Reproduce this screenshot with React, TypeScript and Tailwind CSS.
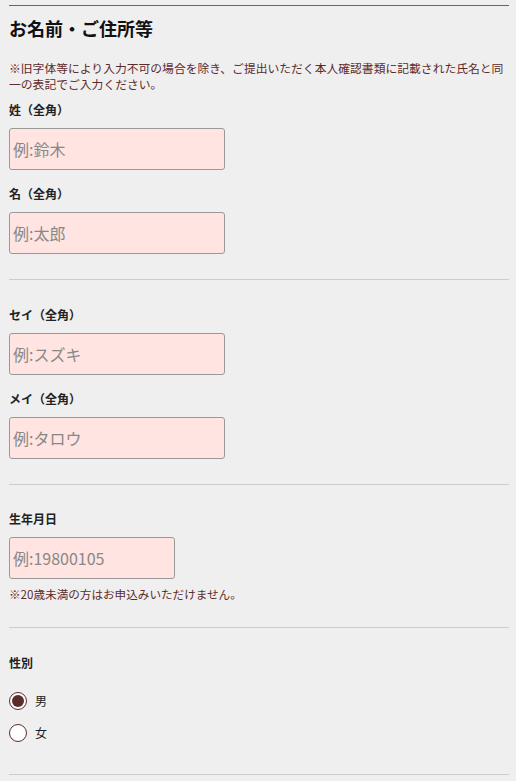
import React from "react";

const font = { fontFamily: '"Noto Sans CJK JP", "Noto Sans", sans-serif' };

function Field({ label, placeholder, wide = true, first = false }: { label: string; placeholder: string; wide?: boolean; first?: boolean }) {
  return (
    <div className={first ? "" : "mt-[15px]"}>
      <div className="text-[12px] leading-[18px] font-bold text-[#222]">{label}</div>
      <input
        placeholder={placeholder}
        className={`mt-[9px] block h-[42px] ${wide ? "w-[216px]" : "w-[166px]"} rounded-[3px] border border-[#999] bg-[#ffe4e1] px-[3px] text-[16px] text-[#333] placeholder:text-[#888] outline-none`}
      />
    </div>
  );
}

function Radio({ label, checked }: { label: string; checked?: boolean }) {
  return (
    <label className="flex h-[32px] items-center gap-[8px]">
      <span className="flex h-[18px] w-[18px] items-center justify-center rounded-full border-[1.5px] border-[#5c2b2b] bg-white">
        {checked && <span className="h-[12px] w-[12px] rounded-full bg-[#5c2b2b]" />}
      </span>
      <span className="text-[12px] text-[#222]">{label}</span>
    </label>
  );
}

export default function App() {
  return (
    <div className="min-h-screen bg-[#efefef] pl-[9px] pt-[5px]" style={font}>
      <div className="w-[500px] border-t border-[#666]">
        <h2 className="mt-[10px] text-[18px] leading-[24px] font-bold text-[#111]">お名前・ご住所等</h2>
        <p className="mt-[20px] text-[11.8px] leading-[16px] text-[#5c2b2b]">
          ※旧字体等により入力不可の場合を除き、ご提出いただく本人確認書類に記載された氏名と同一の表記でご入力ください。
        </p>
        <div className="mt-[9px]">
          <Field first label="姓（全角）" placeholder="例:鈴木" />
          <Field label="名（全角）" placeholder="例:太郎" />
        </div>

        <hr className="mt-[25px] border-[#ccc]" />

        <div className="mt-[26px]">
          <Field first label="セイ（全角）" placeholder="例:スズキ" />
          <Field label="メイ（全角）" placeholder="例:タロウ" />
        </div>

        <hr className="mt-[25px] border-[#ccc]" />

        <div className="mt-[25px]">
          <Field first wide={false} label="生年月日" placeholder="例:19800105" />
          <p className="mt-[7px] text-[11.6px] leading-[16px] text-[#5c2b2b]">※20歳未満の方はお申込みいただけません。</p>
        </div>

        <hr className="mt-[25px] border-[#ccc]" />

        <div className="mt-[26px]">
          <div className="text-[12px] leading-[18px] font-bold text-[#222]">性別</div>
          <div className="mt-[13px]">
            <Radio label="男" checked />
            <Radio label="女" />
          </div>
        </div>

        <hr className="mt-[25px] border-[#ccc]" />
      </div>
    </div>
  );
}
